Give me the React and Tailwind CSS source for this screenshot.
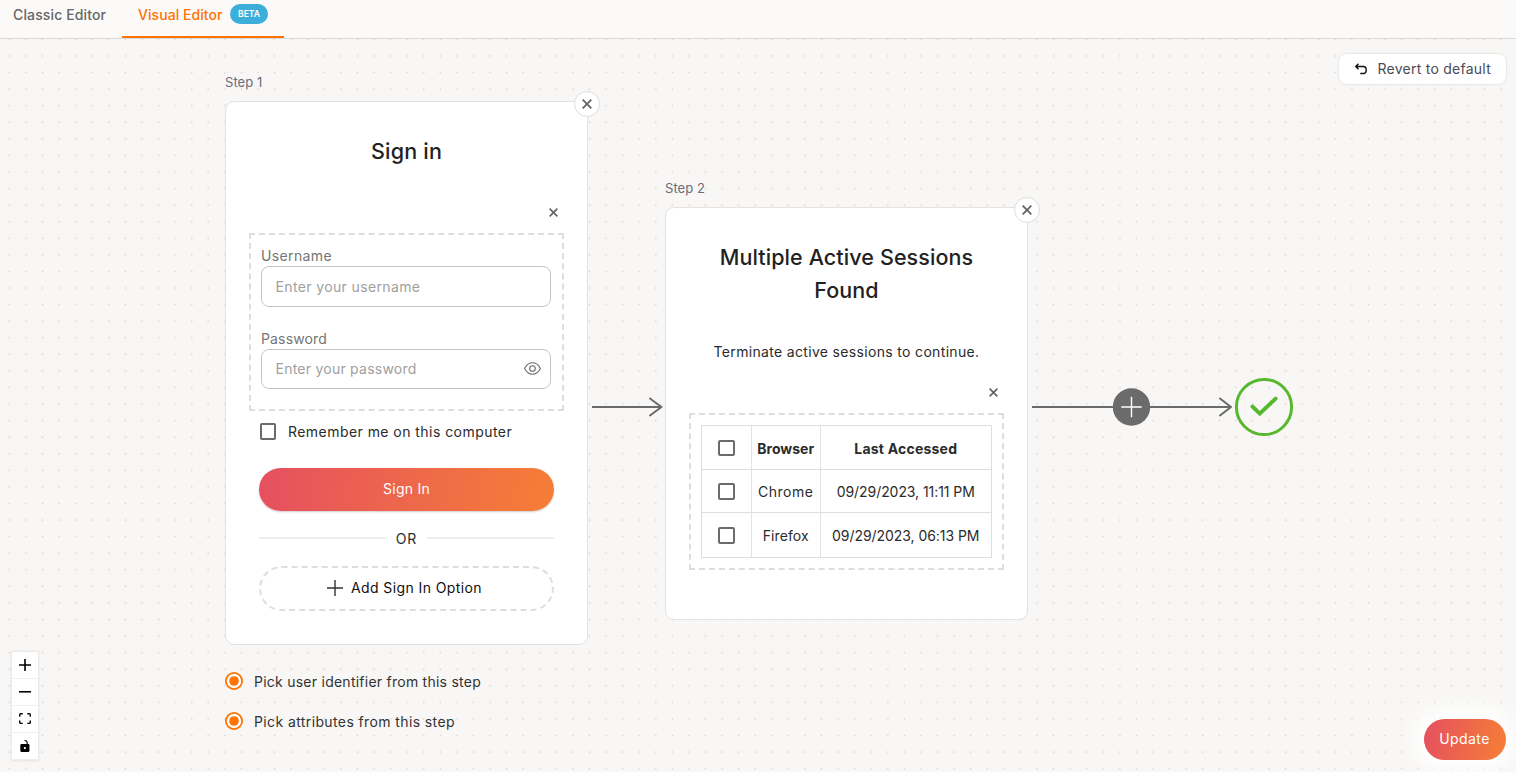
import React from 'react';

function Cross({ className }) {
  return (
    <svg viewBox="0 0 10 10" className={className} fill="none" stroke="#666" strokeWidth="1.9">
      <path d="M0.7 0.7L9.3 9.3M9.3 0.7L0.7 9.3" />
    </svg>
  );
}

function Checkbox() {
  return <span className="block h-[16.5px] w-[16.5px] shrink-0 rounded-[2px] border-2 border-[#6b6b6b] bg-white" />;
}

function CardClose() {
  return (
    <button className="absolute -right-[13px] -top-[11px] flex h-[26px] w-[26px] items-center justify-center rounded-full border border-[#dedede] bg-white">
      <Cross className="h-[10px] w-[10px]" />
    </button>
  );
}

function Node({ label, className, cardClass, children }) {
  return (
    <section className={`absolute w-[363px] ${className}`}>
      <p className="mb-[9px] h-5 text-[13px] leading-5 tracking-[0.05px] text-[#6b6b7b]">{label}</p>
      <div className={`relative flex flex-col rounded-[9px] border border-[#e3e3e3] bg-white ${cardClass}`}>
        <CardClose />
        {children}
      </div>
    </section>
  );
}

function Field({ label, placeholder, labelClass, textClass, icon }) {
  return (
    <label className="mb-[21px] flex flex-col">
      <span className={`h-[21px] leading-[21px] text-[#757575] ${labelClass}`}>{label}</span>
      <span className="flex h-[40.5px] items-center justify-between rounded-lg border border-[#c4c4c4] pl-[13.5px] pr-[9px]">
        <span className={`text-[#a0a0a0] ${textClass}`}>{placeholder}</span>
        {icon}
      </span>
    </label>
  );
}

function Eye() {
  return (
    <svg className="h-[17px] w-[17px]" viewBox="0 0 17 17" fill="none" stroke="#6b6b6b" strokeWidth="1.1">
      <path d="M0.6 8.5C2.4 5 5.1 2.8 8.5 2.8S14.6 5 16.4 8.5C14.6 12 11.9 14.2 8.5 14.2S2.4 12 0.6 8.5Z" />
      <circle cx="8.5" cy="8.5" r="2.8" />
    </svg>
  );
}

function Radio({ children, className }) {
  return (
    <div className="flex h-10 items-center">
      <svg className="-mt-px h-[18px] w-[18px]" viewBox="0 0 18 18">
        <circle cx="9" cy="9" r="8.1" fill="#fff" stroke="#ff7300" strokeWidth="1.8" />
        <circle cx="9" cy="9" r="4.8" fill="#ff7300" />
      </svg>
      <span className={`ml-[11px] text-[#333] ${className}`}>{children}</span>
    </div>
  );
}

function Row({ browser, time, browserClass, timeClass, last }) {
  return (
    <div className={`flex h-[43.5px] border-[#dedede] ${last ? '' : 'border-b'}`}>
      <div className="flex w-[50px] items-center justify-center border-r border-[#e2e2e2] pt-px">
        <Checkbox />
      </div>
      <div className={`flex w-[68.5px] items-center justify-center border-r border-[#e2e2e2] pt-[2px] ${browserClass}`}>{browser}</div>
      <div className={`flex flex-1 items-center justify-center whitespace-nowrap pt-[2px] ${timeClass}`}>{time}</div>
    </div>
  );
}

const controls = [
  ['0 0 32 32', 'M32 18.133H18.133V32h-4.266V18.133H0v-4.266h13.867V0h4.266v13.867H32z'],
  ['0 0 32 5', 'M0 0h32v4.2H0z'],
  ['0 0 32 30', 'M3.692 4.63c0-.53.4-.938.939-.938h5.215V0H4.708C2.13 0 0 2.054 0 4.63v5.216h3.692V4.631zM27.354 0h-5.2v3.692h5.17c.53 0 .984.4.984.939v5.215H32V4.631A4.624 4.624 0 0027.354 0zm.954 24.83c0 .532-.4.94-.939.94h-5.215v3.768h5.215c2.577 0 4.631-2.13 4.631-4.707v-5.139h-3.692v5.139zm-23.677.94c-.531 0-.939-.4-.939-.94v-5.138H0v5.139c0 2.577 2.13 4.707 4.708 4.707h5.138V25.77H4.631z'],
  ['0 0 25 32', 'M21.333 10.667H19.81V7.619C19.81 3.429 16.38 0 12.19 0c-4.114 1.828-1.37 2.133.305 2.438 1.676.305 4.42 2.59 4.42 5.181v3.048H3.047A3.056 3.056 0 000 13.714v15.238A3.056 3.056 0 003.048 32h18.285a3.056 3.056 0 003.048-3.048V13.714a3.056 3.056 0 00-3.048-3.047zM12.19 24.533a3.056 3.056 0 01-3.047-3.047 3.056 3.056 0 013.047-3.048 3.056 3.056 0 013.048 3.048 3.056 3.056 0 01-3.048 3.047z'],
];

export default function App() {
  return (
    <div className="flex h-[772px] w-[1516px] flex-col overflow-hidden bg-[#f8f7f5] font-['Inter',sans-serif] text-[14px] leading-[21px] text-[#2b2b2b]">
      <header className="flex h-[39px] shrink-0 border-b border-[#dadada] bg-[#fbfaf9] font-medium">
        <div className="w-[122px] whitespace-nowrap pl-[13px] pt-1 tracking-[0.13px] text-[#666]">Classic Editor</div>
        <div className="flex w-[162px] items-start border-b-2 border-[#ff7300] pl-4 pt-1">
          <span className="w-[92px] whitespace-nowrap tracking-[0.06px] text-[#ff7300]">Visual Editor</span>
          <span className="flex h-5 w-[38px] items-center justify-center rounded-full bg-[#3bafda] text-[8.6px] font-semibold text-white">BETA</span>
        </div>
      </header>

      <main className="relative flex-1">
        <svg className="absolute inset-0 h-full w-full" aria-hidden="true">
          <defs>
            <pattern id="dots" x="1.1" y="8.7" width="16.574" height="16.574" patternUnits="userSpaceOnUse">
              <circle cx="8.3" cy="8.3" r="0.9" fill="#d8d7d5" />
            </pattern>
          </defs>
          <rect width="100%" height="100%" fill="url(#dots)" />
          <g fill="none" stroke="#6b6b6b" strokeWidth="2">
            <path d="M592 368H661.5M1032 368H1231" />
            <path d="M650 359.5L661.5 368L650 376.5M1220 359.5L1231 368L1220 376.5" strokeLinecap="round" strokeLinejoin="round" />
          </g>
          <circle cx="1131.5" cy="368" r="18.7" fill="#6b6b6b" />
          <path d="M1121.3 368H1141.7M1131.5 357.8V378.2" stroke="#fff" strokeWidth="1.4" />
          <circle cx="1264" cy="368" r="27.6" fill="none" stroke="#57b82e" strokeWidth="3" />
          <path d="M1252.5 367.6L1259.8 374.6L1275.6 359.6" fill="none" stroke="#57b82e" strokeWidth="4" strokeLinecap="round" strokeLinejoin="miter" />
        </svg>

        <Node label="Step 1" className="left-[225px] top-[33px]" cardClass="h-[544px] px-[23px] pt-[33px]">
          <h1 className="h-[33px] text-center text-[21.5px] font-medium leading-[33px] tracking-[0.2px] text-[#222]">Sign in</h1>
          <div className="flex h-[65px] items-end justify-end pb-[16px] pr-[6px]">
            <Cross className="h-[9px] w-[9px]" />
          </div>
          <div className="flex h-[178px] flex-col border-2 border-dashed border-[#dedede] pl-[10px] pr-[11px] pt-[10px]">
            <Field label="Username" placeholder="Enter your username" labelClass="tracking-[0.37px]" textClass="tracking-[0.37px]" />
            <Field label="Password" placeholder="Enter your password" labelClass="tracking-[0.15px]" textClass="tracking-[0.24px]" icon={<Eye />} />
          </div>
          <div className="flex h-[57px] items-start pl-[10.5px] pt-[10px]">
            <span className="mt-[2px]"><Checkbox /></span>
            <span className="ml-[12px] tracking-[0.45px]">Remember me on this computer</span>
          </div>
          <button className="mx-[10px] h-[42.5px] rounded-full bg-linear-[97deg,#e55060,#f67e36] pb-[2px] tracking-[0.26px] text-white shadow-[0_1px_2px_rgba(0,0,0,0.2)]">Sign In</button>
          <div className="mx-[10px] flex h-[55px] items-center gap-[10px]">
            <span className="h-[2px] flex-1 bg-[#ededed]" />
            <span className="tracking-[0.9px]">OR</span>
            <span className="h-[2px] flex-1 bg-[#ededed]" />
          </div>
          <button className="mx-[10px] flex h-[45.5px] items-center justify-center rounded-full border-2 border-dashed border-[#dedede] pr-[4px] text-[#111]">
            <svg className="mr-2 h-4 w-4" viewBox="0 0 16 16" stroke="#333" strokeWidth="1.4">
              <path d="M0 8H16M8 0V16" />
            </svg>
            <span className="-mt-px tracking-[0.4px]">Add Sign In Option</span>
          </button>
        </Node>

        <div className="absolute left-[225px] top-[622px] flex flex-col">
          <Radio className="tracking-[0.25px]">Pick user identifier from this step</Radio>
          <Radio className="tracking-[0.39px]">Pick attributes from this step</Radio>
        </div>

        <Node label="Step 2" className="left-[665px] top-[139px]" cardClass="h-[413px] px-[23px] pt-[33px]">
          <h1 className="text-center text-[21.5px] font-medium leading-[33px] tracking-[0.1px] text-[#222]">
            Multiple Active Sessions
            <br />
            Found
          </h1>
          <p className="mt-[34px] text-center tracking-[0.33px]">Terminate active sessions to continue.</p>
          <div className="flex h-[51px] items-end justify-end pb-[16px] pr-[6px]">
            <Cross className="h-[9px] w-[9px]" />
          </div>
          <div className="h-[157px] border-2 border-dashed border-[#dedede] p-[10px]">
            <div className="flex flex-col border border-[#dedede]">
              <Row browser="Browser" time="Last Accessed" browserClass="font-bold" timeClass="font-bold tracking-[0.22px]" />
              <Row browser="Chrome" time="09/29/2023, 11:11 PM" browserClass="tracking-[0.5px]" timeClass="tracking-[-0.07px]" />
              <Row browser="Firefox" time="09/29/2023, 06:13 PM" browserClass="tracking-[0.09px]" timeClass="tracking-[-0.05px]" last />
            </div>
          </div>
        </Node>

        <button className="absolute right-[10px] top-[15px] flex h-[30px] w-[167px] items-center rounded-lg bg-white pl-4 text-[#4b4b55] shadow-[0_0_2px_1px_rgba(0,0,0,0.07)]">
          <svg className="mr-[11px] h-3 w-3" viewBox="0 0 12 12" fill="none" stroke="#111" strokeWidth="1.4">
            <path d="M3.5 0.8L0.8 3.5L3.5 6.2M0.8 3.5H8.2C10.2 3.5 11.2 4.8 11.2 6.9S10.2 10.5 8.2 10.5H5.3" />
          </svg>
          <span className="-ml-[0.5px] -mt-[2px] whitespace-nowrap tracking-[0.25px]">Revert to default</span>
        </button>

        <div className="absolute left-[12px] top-[613px] flex flex-col shadow-[0_0_2px_1px_rgba(0,0,0,0.08)]">
          {controls.map(([viewBox, d]) => (
            <button key={viewBox} className="flex h-[27px] w-[26px] items-center justify-center border-b border-[#eee] bg-white">
              <svg viewBox={viewBox} className="max-h-3 w-full max-w-3">
                <path d={d} />
              </svg>
            </button>
          ))}
        </div>

        <button className="absolute bottom-[12px] right-[10px] h-[41px] w-[82px] rounded-full bg-linear-[100deg,#e55060,#f67e36] pb-[3px] pr-px tracking-[0.4px] text-white shadow-[0_0_20px_12px_rgba(255,255,255,0.95)]">Update</button>
      </main>
    </div>
  );
}
